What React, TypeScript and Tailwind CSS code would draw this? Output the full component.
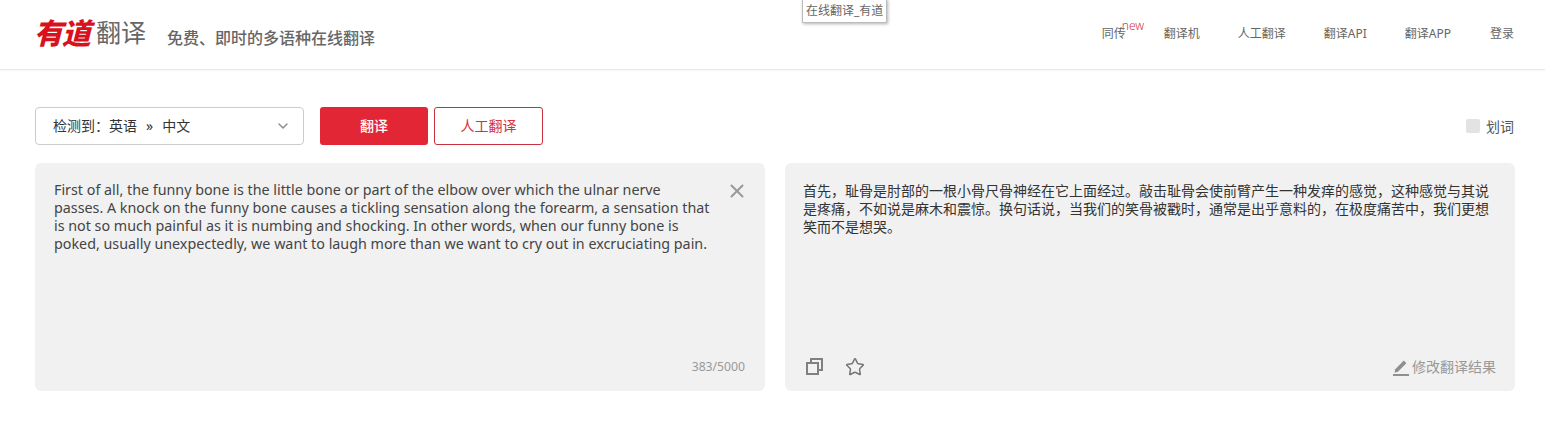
import { Star, X, ChevronDown } from 'lucide-react'

const navItems = ['翻译机', '人工翻译', '翻译API', '翻译APP', '登录']

function EditIcon() {
  return (
    <svg width="17" height="18" viewBox="0 0 17 18" className="shrink-0">
      <path d="M3 11.4 L11.8 2.6 L14.4 5.2 L5.6 14 L2.6 14.6 Z" fill="#8f8f8f" />
      <rect x="1" y="16" width="16" height="2" fill="#8f8f8f" />
    </svg>
  )
}

function CopyIcon() {
  return (
    <svg width="17" height="17" viewBox="0 0 17 17" fill="none" stroke="#808080" strokeWidth="2" className="ml-[3px]">
      <rect x="1" y="5" width="11" height="11" />
      <path d="M5 4 V1 H16 V12 H13" />
    </svg>
  )
}

export default function App() {
  return (
    <div className="relative h-[431px] w-[1545px] overflow-hidden bg-white font-['Noto_Sans','Noto_Sans_CJK_SC',sans-serif] text-[#333]">
      <header className="flex h-[70px] items-center border-b border-[#e8e8e8] pr-[31px] pl-[35px] shadow-[0_1px_2px_rgba(0,0,0,0.03)]">
        <span className="-ml-[1px] mb-[4px] text-[29px] leading-none font-black tracking-[-1px] text-[#d8121d] italic">有道</span>
        <span className="mb-[4px] ml-[6px] text-[25px] leading-none text-[#666]">翻译</span>
        <span className="mt-[6px] ml-[21px] text-[16px] font-medium text-[#666]">免费、即时的多语种在线翻译</span>
        <nav className="mb-[2px] ml-auto flex items-center text-[12px] text-[#666]">
          <span className="relative mr-[38px]">
            同传
            <span className="absolute top-[-8px] left-[20px] text-[12px] font-light text-[#d8313d]">new</span>
          </span>
          {navItems.map((item, i) => (
            <span key={item} className={i === navItems.length - 1 ? '' : i === navItems.length - 2 ? 'mr-[39px]' : 'mr-[38px]'}>
              {item}
            </span>
          ))}
        </nav>
      </header>

      <div className="absolute top-[-1px] left-[802px] border border-[#bbb] bg-white py-[2px] pr-[3px] pl-[3px] text-[12px] leading-[18px] text-[#666] shadow-[1px_1px_3px_rgba(0,0,0,0.3)]">
        在线翻译_有道
      </div>

      <div className="pr-[30px] pl-[35px]">
        <div className="mt-[37px] flex h-[38px] items-center">
          <div className="flex h-[38px] w-[269px] items-center rounded-[4px] border border-[#ccc] pr-[12px] pb-[1px] pl-[17px] text-[14px] text-[#333]">
            <span>检测到：英语</span>
            <span className="mx-[9px] text-[14px]">»</span>
            <span>中文</span>
            <ChevronDown size={16} className="ml-auto text-[#888]" />
          </div>
          <button className="ml-[16px] h-[38px] w-[108px] rounded-[3px] bg-[#e32636] pb-[1px] text-[14px] font-medium text-white">翻译</button>
          <button className="ml-[6px] h-[38px] w-[109px] rounded-[3px] border border-[#c8303f] pb-[1px] text-[14px] text-[#d8313d]">人工翻译</button>
          <label className="ml-auto flex items-center gap-[6px] pr-[1px] text-[14px] text-[#555]">
            <span className="h-[14px] w-[14px] rounded-[2px] bg-[#e3e3e3]" />
            划词
          </label>
        </div>

        <div className="mt-[18px] flex gap-[20px]">
          <div className="relative flex h-[228px] w-[730px] flex-col rounded-[6px] bg-[#f1f1f1] pt-[18px] pb-[15px] pl-[19px]">
            <p className="text-[14.3px] leading-[18px] text-[#444]">
              First of all, the funny bone is the little bone or part of the elbow over which the ulnar nerve<br />
              passes. A knock on the funny bone causes a tickling sensation along the forearm, a sensation that<br />
              is not so much painful as it is numbing and shocking. In other words, when our funny bone is<br />
              poked, usually unexpectedly, we want to laugh more than we want to cry out in excruciating pain.
            </p>
            <X size={22} strokeWidth={2.2} className="absolute top-[17px] right-[17px] text-[#999]" />
            <span className="mt-auto self-end pr-[20px] text-[12.2px] text-[#999]">383/5000</span>
          </div>

          <div className="flex h-[228px] w-[730px] flex-col rounded-[6px] bg-[#f1f1f1] pt-[19px] pr-[19px] pb-[14px] pl-[18px]">
            <p className="text-[14px] leading-[18px] text-[#333]">
              首先，耻骨是肘部的一根小骨尺骨神经在它上面经过。敲击耻骨会使前臂产生一种发痒的感觉，这种感觉与其说<br />
              是疼痛，不如说是麻木和震惊。换句话说，当我们的笑骨被戳时，通常是出乎意料的，在极度痛苦中，我们更想<br />
              笑而不是想哭。
            </p>
            <div className="mt-auto flex items-center">
              <CopyIcon />
              <Star size={20} strokeWidth={1.8} className="ml-[22px] text-[#777]" />
              <span className="ml-auto flex items-center gap-[3px] text-[14px] text-[#999]">
                <EditIcon />
                修改翻译结果
              </span>
            </div>
          </div>
        </div>
      </div>
    </div>
  )
}
